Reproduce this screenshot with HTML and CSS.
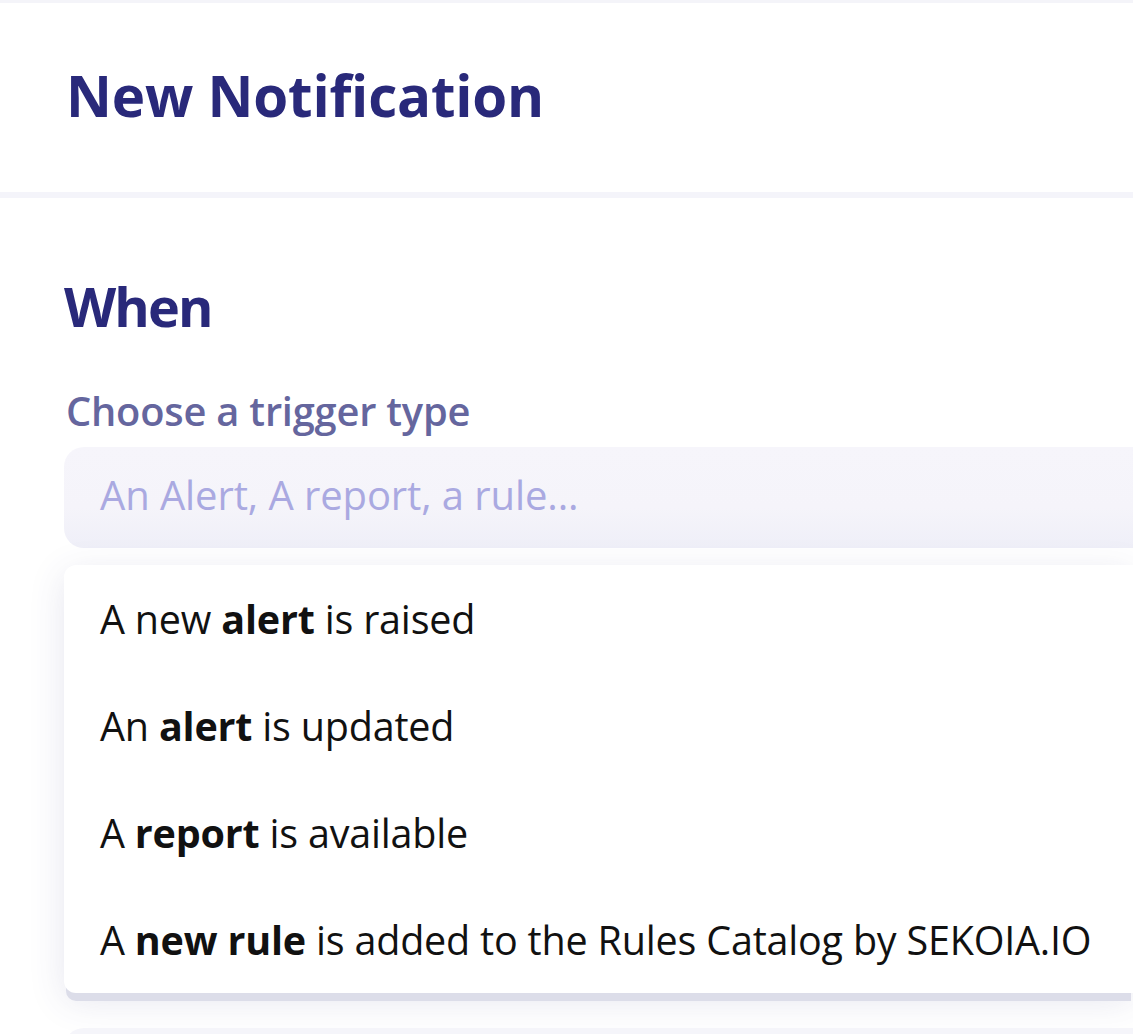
FILE: index.html
```html
<!DOCTYPE html>
<html lang="en">
<head>
<meta charset="utf-8">
<title>New Notification</title>
<link rel="stylesheet" href="styles.css">
</head>
<body>
<div class="page">
  <header class="header">
    <h1 class="title">New Notification</h1>
  </header>
  <main class="content">
    <h2 class="section-title">When</h2>
    <label class="field-label">Choose a trigger type</label>
    <div class="select">
      <span class="placeholder">An Alert, A report, a rule...</span>
    </div>
    <ul class="menu">
      <li class="menu-item"><span>A new <b>alert</b> is raised</span></li>
      <li class="menu-item"><span>An <b>alert</b> is updated</span></li>
      <li class="menu-item"><span>A <b>report</b> is available</span></li>
      <li class="menu-item"><span>A <b>new rule</b> is added to the Rules Catalog by SEKOIA.IO</span></li>
    </ul>
    <div class="next-field"></div>
  </main>
</div>
</body>
</html>
```

FILE: styles.css
```css
html, body {
  margin: 0;
  padding: 0;
  background: #ffffff;
  font-family: "Open Sans", "Noto Sans", "DejaVu Sans", sans-serif;
  overflow: hidden;
}

.page {
  border-top: 3px solid #f4f4f9;
  width: 1133px;
  height: 1031px;
  overflow: hidden;
}

.header {
  display: flex;
  align-items: center;
  padding-left: 66px;
  border-bottom: 6px solid #f4f4fa;
  box-sizing: border-box;
  height: 195px;
}

.title {
  margin: 0;
  font-size: 56.5px;
  font-weight: 700;
  color: #29297a;
  letter-spacing: -0.2px;
  transform: translateY(-2px);
}

.content {
  padding: 71px 0 0 64px;
}

.section-title {
  margin: 0;
  font-size: 54px;
  font-weight: 700;
  color: #29297a;
  line-height: 74px;
  letter-spacing: -1.9px;
}

.field-label {
  display: block;
  margin: 44px 0 0 2px;
  font-size: 39.8px;
  font-weight: 600;
  color: #65669e;
  line-height: 48px;
  letter-spacing: -0.2px;
}

.select {
  margin-top: 12px;
  height: 101px;
  border-radius: 20px 0 0 20px;
  background: linear-gradient(#f6f5fb 0%, #f5f4fa 60%, #efeff8 100%);
  display: flex;
  align-items: center;
  padding-left: 36px;
  box-sizing: border-box;
}

.placeholder {
  font-size: 40px;
  color: #aaa9e1;
  letter-spacing: -0.1px;
  transform: translateY(-3px);
}

.menu {
  list-style: none;
  margin: 17px 0 0 0;
  padding: 0;
  background: #ffffff;
  border-radius: 12px 0 0 12px;
  box-shadow: 0 10px 0 -2px #dcdde9, 0 8px 36px rgba(60, 60, 130, 0.13);
}

.menu-item {
  height: 107px;
  display: flex;
  align-items: center;
  padding-left: 36px;
  font-size: 39.5px;
  color: #111111;
  letter-spacing: -0.2px;
}

.menu-item b {
  font-weight: 700;
}

.next-field {
  margin-top: 35px;
  height: 60px;
  background: #f5f5fa;
  border-radius: 20px 0 0 0;
}
```
